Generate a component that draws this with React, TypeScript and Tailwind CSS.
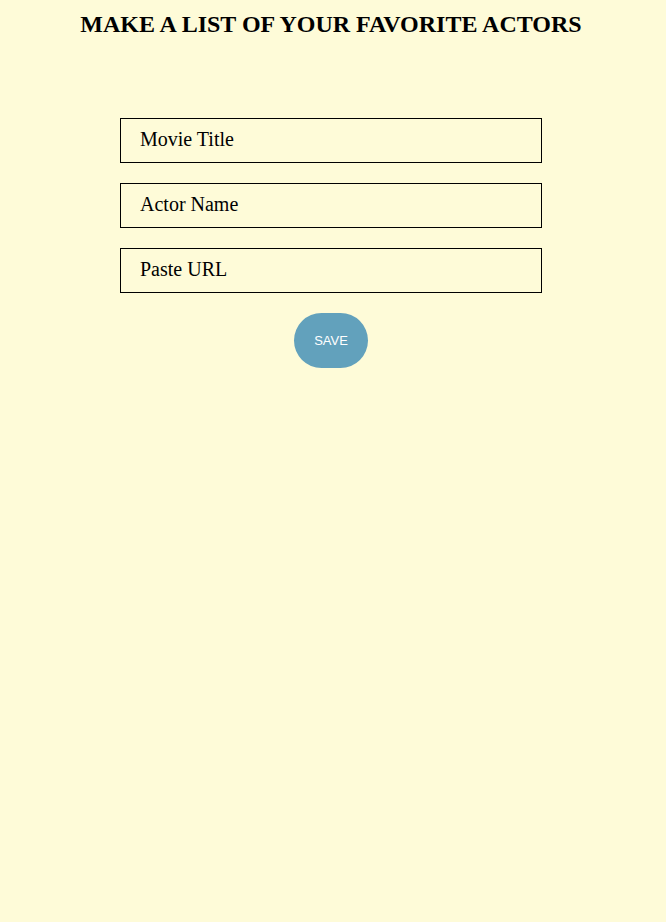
import { useState } from "react";

const fields = [
  { id: "movie", label: "Movie Title" },
  { id: "actor", label: "Actor Name" },
  { id: "url", label: "Paste URL" },
];

export default function App() {
  const [values, setValues] = useState<Record<string, string>>({});

  return (
    <main className="min-h-screen bg-[#fefbd8] pt-2 pr-1 font-['Liberation_Serif',serif] text-black">
      <h1 className="text-center text-2xl font-bold">MAKE A LIST OF YOUR FAVORITE ACTORS</h1>
      <form
        className="mx-auto mt-[78px] flex max-w-[422px] flex-col items-center gap-5"
        onSubmit={(event) => event.preventDefault()}
      >
        {fields.map(({ id, label }) => (
          <input
            key={id}
            id={id}
            type="text"
            aria-label={label}
            placeholder={label}
            value={values[id] ?? ""}
            onChange={(event) => setValues({ ...values, [id]: event.target.value })}
            className="h-[45px] w-full border border-black bg-transparent px-[19px] pb-[2px] text-xl placeholder:text-black"
          />
        ))}
        <button
          type="submit"
          className="h-[55px] rounded-full bg-[#62a1bc] px-5 font-['Liberation_Sans',sans-serif] text-[13px] text-white"
        >
          SAVE
        </button>
      </form>
    </main>
  );
}
